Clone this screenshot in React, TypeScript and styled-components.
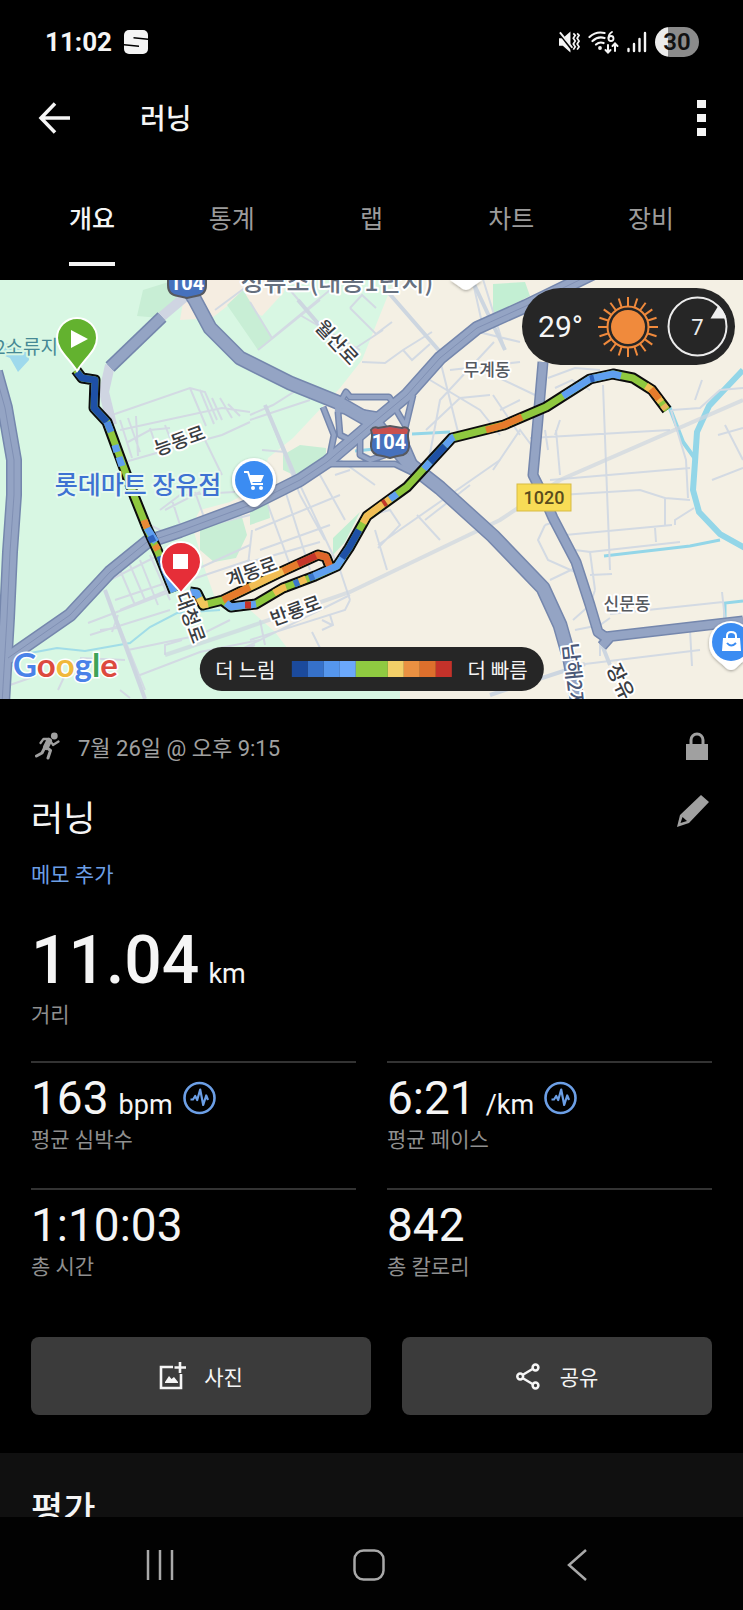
import React from "react";
import styled, { createGlobalStyle, css } from "styled-components";

const GlobalStyle = createGlobalStyle`
  * { box-sizing: border-box; }
  body {
    margin: 0;
    background: #000;
    color: #f5f5f5;
    font-family: Roboto, "Noto Sans CJK KR", sans-serif;
  }
  button, h1, h2, p, dl, dt, dd { margin: 0; padding: 0; font: inherit; }
  button { border: 0; background: none; color: inherit; cursor: pointer; }
  svg { display: block; }
`;

/* ---------- layout ---------- */

const Screen = styled.div`
  display: flex;
  flex-direction: column;
  height: 100vh;
`;

const StatusBar = styled.div`
  display: flex;
  align-items: center;
  justify-content: space-between;
  height: 83px;
  padding: 0 44px 0 45px;
  flex: none;
`;

const StatusGroup = styled.div<{ $gap: number }>`
  display: flex;
  align-items: center;
  gap: ${(p) => p.$gap}px;
`;

const Clock = styled.time`
  font-size: 26px;
  font-weight: 700;
  line-height: 32px;
`;

const Battery = styled.span`
  width: 44px;
  height: 30px;
  border-radius: 15px;
  background: linear-gradient(90deg, #ececec 30%, #8b8b8b 30%);
  color: #111;
  font-size: 24px;
  font-weight: 600;
  line-height: 30px;
  text-align: center;
`;

const AppBar = styled.header`
  display: flex;
  align-items: center;
  height: 70px;
  padding: 0 30px 0 38px;
  flex: none;
`;

const IconButton = styled.button`
  display: flex;
  align-items: center;
  justify-content: center;
`;

const AppTitle = styled.h1`
  flex: 1;
  margin-left: 70px;
  padding-top: 3px;
  font-size: 28px;
  font-weight: 500;
  line-height: 40px;
`;

const Tabs = styled.nav`
  display: flex;
  height: 127px;
  padding: 29px 22px 14px;
  flex: none;
`;

const TabSlot = styled.div`
  flex: 1;
  display: flex;
  justify-content: center;
`;

const Tab = styled.button<{ $active?: boolean }>`
  display: flex;
  align-items: center;
  padding-bottom: 4px;
  border-bottom: 4px solid transparent;
  color: #9c9c9c;
  font-size: 25px;
  line-height: 36px;
  ${(p) =>
    p.$active &&
    css`
      color: #f5f5f5;
      font-weight: 500;
      border-bottom-color: #f5f5f5;
    `}
`;

const Content = styled.main`
  flex: 1;
  min-height: 0;
  overflow-y: auto;
  scrollbar-width: none;
`;

/* ---------- map ---------- */

const MapBox = styled.section`
  position: relative;
  height: 419px;
  overflow: hidden;
  background: #f4f0e4;
`;

const MapSvg = styled.svg`
  width: 100%;
  height: 100%;
`;

const WeatherPill = styled.div`
  position: absolute;
  top: 8px;
  right: 8px;
  display: flex;
  align-items: center;
  gap: 9px;
  height: 77px;
  padding: 0 7px 0 16px;
  border-radius: 39px;
  background: #262626;
`;

const Temperature = styled.span`
  padding-right: 6px;
  font-size: 30px;
`;

const Legend = styled.div`
  position: absolute;
  bottom: 8px;
  left: 50%;
  transform: translateX(-50%);
  display: flex;
  align-items: center;
  gap: 16px;
  height: 44px;
  padding: 0 16px;
  border-radius: 22px;
  background: #262626;
  font-size: 20px;
  white-space: nowrap;
`;

const Scale = styled.div`
  display: flex;
`;

const Swatch = styled.span<{ $color: string; $span: number }>`
  width: ${(p) => p.$span * 16}px;
  height: 16px;
  background: ${(p) => p.$color};
`;

/* ---------- details ---------- */

const Details = styled.section`
  padding: 24px 31px 38px;
`;

const MetaRow = styled.div`
  display: flex;
  align-items: center;
  justify-content: space-between;
  padding: 0 4px;
  height: 46px;
`;

const When = styled.p`
  display: flex;
  align-items: center;
  gap: 17px;
  color: #a0a0a0;
  font-size: 22px;
`;

const TitleRow = styled.div`
  display: flex;
  align-items: flex-start;
  justify-content: space-between;
  margin-top: 26px;
  padding-right: 3px;
`;

const Title = styled.h2`
  font-size: 35px;
  font-weight: 400;
  line-height: 50px;
`;

const AddNote = styled.button`
  margin-top: 14px;
  color: #6c9fe6;
  font-size: 21px;
  line-height: 32px;
`;

const Stat = styled.dl<{ $ruled?: boolean }>`
  display: flex;
  flex-direction: column-reverse;
  ${(p) =>
    p.$ruled &&
    css`
      height: 127px;
      justify-content: flex-end;
      padding-top: 9px;
      border-top: 2px solid #333;
    `}
`;

const StatLabel = styled.dt`
  color: #8f8f8f;
  font-size: 21px;
  line-height: 32px;
`;

const StatValue = styled.dd<{ $large?: boolean }>`
  display: flex;
  align-items: baseline;
  gap: ${(p) => (p.$large ? 9 : 10)}px;
  font-size: ${(p) => (p.$large ? 66 : 46)}px;
  font-weight: ${(p) => (p.$large ? 500 : 400)};
  line-height: ${(p) => (p.$large ? 76 : 52)}px;
`;

const Unit = styled.span`
  font-size: 27px;
  font-weight: 400;
  line-height: 28px;
`;

const BadgeWrap = styled.span`
  align-self: center;
`;

const Headline = styled.div`
  margin: 32px 0 30px;
`;

const StatGrid = styled.div`
  display: grid;
  grid-template-columns: 1fr 1fr;
  column-gap: 31px;
`;

const Actions = styled.div`
  display: flex;
  gap: 31px;
  margin-top: 22px;
`;

const ActionButton = styled.button<{ $grow: number; $gap: number }>`
  flex: ${(p) => p.$grow} 1 0;
  display: flex;
  align-items: center;
  justify-content: center;
  gap: ${(p) => p.$gap}px;
  height: 78px;
  border-radius: 8px;
  background: #3b3b3b;
  font-size: 21px;
`;

const Review = styled.section`
  padding: 33px 31px;
  background: #101010;
`;

const ReviewTitle = styled(Title)`
  font-weight: 500;
`;

const SystemNav = styled.footer`
  display: flex;
  align-items: center;
  justify-content: space-between;
  height: 93px;
  padding: 2px 152px 0 144px;
  background: #020202;
  flex: none;
`;

/* ---------- icons ---------- */

const Pulse = () => (
  <svg width="33" height="34" viewBox="0 0 33 34" fill="none" stroke="#6c9fe6" role="img" aria-label="그래프">
    <circle cx="16.500" cy="17" r="15" strokeWidth="2.600" />
    <path d="M7.500 18.500h2.500l2.200-3.500 2 4 3-10.500 3 15.500 3-9.500 1.800 4.500" strokeWidth="2.200" strokeLinejoin="round" />
  </svg>
);

const Sun = () => (
  <svg width="60" height="60" viewBox="-30 -30 60 60" role="img" aria-label="맑음">
    <g stroke="#f08a3c" strokeWidth="2">
      {Array.from({ length: 20 }, (_, i) => (
        <line key={i} x1="0" y1="-21" x2="0" y2="-30" transform={`rotate(${i * 18})`} />
      ))}
    </g>
    <circle r="20.500" fill="none" stroke="#f08a3c" strokeWidth="2" />
    <circle r="17" fill="#f08a3c" />
  </svg>
);

const Wind = () => (
  <svg width="61" height="61" viewBox="-30.500 -30.500 61 61">
    <circle r="29" fill="none" stroke="#ececec" strokeWidth="2" />
    <path d="M13-8L21-21A30 30 0 0 1 29-8Z" fill="#f0f0f0" />
    <text x="0" y="8" textAnchor="middle" fontSize="22" fill="#ececec">7</text>
  </svg>
);

/* ---------- map data ---------- */

const minorRoads = [
  // north-west grid
  "M112 135L190 108 205 112 217 140M120 150L222 128 250 132M125 182L160 172 222 155 250 142M120 140L132 178M128 138L140 172M136 136L138 176M190 108L206 146M200 110L214 144M212 118L222 140M220 118L232 138M228 124L240 136M128 162L150 150 170 148M150 148L156 166M165 145L170 158M205 160L222 195",
  // north centre
  "M258 70L320 20M290 10L345 75M250 22L272 58 330 10M345 75L383 50M300 35L360 70M250 135L273 125 300 108M265 125L300 215M262 170L285 172M215 30L250 4M350 28L376 54 392 42M350 28L362 15 376 28",
  // north-east
  "M362 82L385 83 403 70 432 52M403 70L412 80 430 64M472 -2L484 52M482 -4L505 70M470 50L520 62M494 62L440 120 425 200M440 80L460 160M426 150L460 118 490 115M430 100L480 130 500 155M450 90L520 82M493 95L535 115M493 115L520 155M493 190L520 150 535 170M500 130L520 120",
  "M548 98L575 88 600 90M555 108L572 100 590 110M603 105L610 290M530 158L670 150M550 200L690 188M545 150L548 170M556 150L560 195M671 130L686 180 688 218M672 130L700 128 720 110 743 108M695 120L702 100M718 155L743 148M725 145L743 180M712 200L743 188M555 155L560 140",
  // east
  "M560 215L640 210 665 218 665 245M665 218L690 220M675 245L675 240 694 228M565 255L672 245M590 272L680 262M655 248L656 262M575 270L590 272 595 310M590 295L612 294M545 245L538 260 548 280 575 292M545 245L560 240M550 300L575 288M573 340L590 325 595 310M575 350L600 345 610 338M610 334L723 322M722 312L725 340M585 384L700 370M600 355L600 376M690 350L692 386",
  // centre
  "M250 140L310 120M270 208L340 180 375 205M300 215L325 260M255 250L340 215M260 270L330 245M268 225L290 285M285 210L310 290M300 205L340 290M320 195L345 240M250 225L262 220 288 200 310 188M375 250L387 290M370 235L390 230 400 245 378 268M417 235L440 260M378 265L500 180M335 195L350 190M470 205L425 240M340 290L350 320M350 315L240 370M250 360L345 330 350 320M312 352L320 368M322 340L332 345M330 335L333 345 322 350M260 340L265 365M255 365L230 375",
  // south-west
  "M105 310L145 410M110 300L165 272M115 320L175 300M120 330L180 305M88 343L175 310M90 355L170 330M120 290L135 325M130 285L145 320M140 280L158 325M150 275L170 320M118 335L112 352M100 350L118 348M128 370L200 355 230 340M165 375L165 365 182 360M140 395L200 372 260 360M125 380L80 378M120 410L130 418M10 405L30 398M65 395L58 410M150 245L170 255 250 235M165 230L200 212M172 220L180 245M195 212L205 240M160 230L180 215 235 212",
  // southern strip
  "M190 300L250 280M195 290L250 265M250 282L320 262M252 250L248 285",
];

const wideMinor = ["M165 375L240 350 350 312 500 240 560 200 743 120", "M600 360L610 385M490 415L585 384"];

const highways: { d: string; w: number }[] = [
  { d: "M-5 92L5 128 14 180 14 215 10 272 7 338 2 424", w: 14 },
  { d: "M8 378L70 335 110 292 147 262 180 251 250 225 300 200 327 182 367 148 407 115 440 78 477 48 526 26 600 -10", w: 12 },
  { d: "M186 6L195 20 210 48 240 78 290 103 337 122 377 145 407 182 440 208 493 256 543 308 560 345 570 380 578 424", w: 13 },
  { d: "M543 82L536 162 533 195 543 215 553 238 576 282 590 325 598 352 605 357 743 341M610 357L602 366", w: 9 },
  { d: "M110 87L162 37", w: 11 },
  { d: "M337 128L346 112 350 117 389 117 398 130M323 127L334 155 329 180M338 132L340 155 350 160 363 155M327 184L395 184 420 196M413 115L403 157 413 180 420 196M395 128L405 145M335 130L360 132 384 136M360 158L360 175 370 180 385 175", w: 5 },
];

const track =
  "M76 90L82 98 95 100 94 128 107 142 135 218 147 248 158 272 174 312M190 312L197 313 203 325 223 320 250 307 283 291 318 275 326 277 330 287M223 321L231 327 256 324 283 308 315 296 337 286 349 268 367 236 407 207 452 158 504 145 546 127 590 99 613 94 633 98 652 110 667 130";

type Leg = { color: string; d: string };
const legs: Leg[] = [
  { color: "#1e50a6", d: "M77 92L82 98 95 100 94 128 107 142" },
  { color: "#4f8be0", d: "M107 142L111 152" },
  { color: "#5f9ff0", d: "M115 165L117 172M119 177L122 186M147 248L156 262" },
  { color: "#2f62bd", d: "M127 200L129 205M150 256L153 262M160 276L164 288" },
  { color: "#e98a35", d: "M144 240L147 248M155 265L158 270" },
  { color: "#5f9ff0", d: "M164 288L174 312" },
  { color: "#5f9ff0", d: "M190 312L197 313 199 318" },
  { color: "#f2c75b", d: "M199 318L203 325 208 324" },
  { color: "#e57b2c", d: "M223 320L250 307M281 292L300 283" },
  { color: "#f2bd55", d: "M250 307L283 291" },
  { color: "#c5352a", d: "M298 284L318 275" },
  { color: "#e0662a", d: "M316 276L318 275 326 277 330 287" },
  { color: "#5f9ff0", d: "M226 323L231 327 246 325M250 325L256 324" },
  { color: "#c5352a", d: "M245 325L251 325" },
  { color: "#f2bd55", d: "M274 313L283 308 286 307M299 302L306 299" },
  { color: "#3c77cc", d: "M294 304L299 302M309 298L315 296" },
  { color: "#5f9ff0", d: "M314 296L337 286 343 277" },
  { color: "#1e50a6", d: "M342 278L349 268 359 250" },
  { color: "#f2bd55", d: "M363 243L367 236 383 224M386 222L390 219" },
  { color: "#c5352a", d: "M383 224L386 222" },
  { color: "#5f9ff0", d: "M390 219L397 214M424 189L430 182M445 166L452 158 454 157" },
  { color: "#1e50a6", d: "M430 182L445 166" },
  { color: "#e57b2c", d: "M486 150L504 145 522 137" },
  { color: "#5f9ff0", d: "M563 116L590 99 613 94 621 96" },
  { color: "#2c5fb8", d: "M590 99L594 98" },
  { color: "#f2bd55", d: "M646 106L652 110M658 118L661 122" },
  { color: "#e57b2c", d: "M651 109L659 119" },
  { color: "#e8b45a", d: "M663 125L666 129" },
];

const MapArt = () => (
  <MapSvg viewBox="0 0 743 419" preserveAspectRatio="xMidYMid slice" role="img" aria-label="러닝 경로 지도">
    <defs>
      <filter id="pinShadow" x="-30%" y="-30%" width="160%" height="160%">
        <feDropShadow dx="0" dy="1" stdDeviation="1.500" floodOpacity="0.350" />
      </filter>
    </defs>
    <rect width="743" height="419" fill="#f4f0e4" />
    <path d="M0 0H394L362 80 340 108 293 158 268 178 262 205 230 222 200 230 192 245 205 290 215 318 250 330 275 352 300 385 400 408V419H0Z" fill="#d8f7e3" />
    <path d="M180 40L186 4 205 0 285 0 284 12 262 36 250 30 245 12 212 38Z" fill="#f5ede1" />
    <path d="M137 36L143 10 175 0 182 12 160 38Z M227 25L243 10 272 58 258 70Z M283 175L300 165 326 168 326 180 296 196 283 190Z M200 250L240 230 247 255 236 278 214 282 200 270Z M250 225L268 218 270 238 250 245Z" fill="#c8eed5" />
    <path d="M493 4L525 2 530 16 493 34Z M333 258L360 232 345 262 333 275Z" fill="#c3efd3" />
    <path d="M0 62L28 68 29 80 18 92 10 78 0 74Z" fill="#9ed9ec" />
    <g fill="none" stroke="#93d6e8">
      <path d="M743 90L709 126 697 152 695 182 693 210 699 232 720 254 745 268" strokeWidth="6" />
      <path d="M669 126L683 162 696 180" strokeWidth="4" />
      <path d="M604 276L690 266 720 260M725 340V323L743 321" strokeWidth="3" />
      <path d="M412 154L450 152M355 171L385 168" strokeWidth="3" />
      <path d="M0 402L20 375 57 368 85 371 130 363 150 347 177 333 220 330" strokeWidth="2" opacity="0.800" />
    </g>
    <g fill="none" stroke="#d3dae3" strokeWidth="2">
      {minorRoads.map((d) => <path key={d} d={d} />)}
    </g>
    <g fill="none" stroke="#cdd6e0" strokeWidth="4">
      <path d={wideMinor[0]} opacity="0.700" />
      <path d={wideMinor[1]} />
      <path d="M298 20L345 75M388 12L442 74M265 125L300 208M472 0L505 70M105 310L145 419" />
    </g>
    <path d="M186 16L160 38M110 85L104 112 112 145" fill="none" stroke="#cfd5e2" strokeWidth="10" />
    <g fill="none" stroke="#7587ad" strokeLinejoin="round">
      {highways.map((h) => <path key={h.d} d={h.d} strokeWidth={h.w + 2} />)}
    </g>
    <g fill="none" stroke="#94a4c4" strokeLinejoin="round">
      {highways.map((h) => <path key={h.d} d={h.d} strokeWidth={h.w - 1} />)}
    </g>
    <g fill="none" stroke="#8090b4" strokeWidth="1">
      <path d={highways[0].d} />
      <path d={highways[1].d} />
    </g>

    <g fill="none" strokeLinejoin="round">
      <path d={track} stroke="#0c0c0c" strokeWidth="11" />
      <path d={track} stroke="#8fc83f" strokeWidth="7" />
      {legs.map((l) => <path key={l.d} d={l.d} stroke={l.color} strokeWidth="7" />)}
    </g>

    <g fontFamily='"Noto Sans CJK KR", sans-serif' fontWeight="500" stroke="#fff" strokeWidth="4" strokeLinejoin="round" paintOrder="stroke" textAnchor="middle">
      <text x="58" y="74" textAnchor="end" fontSize="19" fill="#468995" fontWeight="400" stroke="#d8f7e3">2소류지</text>
      <text x="337" y="11" fontSize="25" fill="#66707f">정류소(대동1단지)</text>
      <text fontSize="19" fill="#3a3d42" transform="translate(332 67) rotate(47)">월산로</text>
      <text x="487" y="96" fontSize="17" fill="#55595f">무계동</text>
      <text fontSize="19" fill="#3a3d42" transform="translate(182 167) rotate(-20)">능동로</text>
      <text x="138" y="214" fontSize="25" fill="#3e72d2" stroke="#e6faee">롯데마트 장유점</text>
      <text fontSize="19" fill="#3a3d42" transform="translate(254 298) rotate(-20)">계동로</text>
      <text fontSize="19" fill="#3a3d42" transform="translate(298 337) rotate(-20)">반룡로</text>
      <text fontSize="19" fill="#3a3d42" transform="translate(184 340) rotate(70)">대청로</text>
      <text x="627" y="330" fontSize="17" fill="#55595f">신문동</text>
      <text fontSize="20" fill="#4a5878" textAnchor="start" transform="translate(563 364) rotate(84)">남해2지</text>
      <text fontSize="20" fill="#3a3d42" textAnchor="start" transform="translate(606 388) rotate(64)">장유</text>
    </g>

    <g fontFamily="Roboto, sans-serif" fontWeight="700" fontSize="20" fill="#fff" textAnchor="middle">
      <path d="M371 150Q374 146 378 148L390 146 402 148Q406 146 409 150 407 155 409 163 410 172 403 175 396 176 390 178 384 176 377 175 370 172 371 163 373 155 371 150Z" fill="#4671bd" stroke="#57595f" strokeWidth="2" />
      <path d="M372 150Q374 147 378 149L390 147 402 149Q406 147 408 150L407 154H373Z" fill="#c8504e" />
      <text x="389" y="169">104</text>
      <path d="M168-10H206V5Q206 15 196 16L187 18 178 16Q168 15 168 5Z" fill="#4671bd" stroke="#57595f" strokeWidth="2" />
      <text x="187" y="10">104</text>
      <rect x="517" y="204" width="54" height="27" fill="#f8dc56" stroke="#d7bb45" />
      <text x="544" y="224" fontSize="18" fill="#5a4c1c" fontWeight="500">1020</text>
    </g>

    <g filter="url(#pinShadow)" fill="#fff">
      <path d="M254 178A22 22 0 0 1 276 200C276 213 267 217 261 223Q254 231 247 223C241 217 232 213 232 200A22 22 0 0 1 254 178Z" />
      <path d="M731 341A22 22 0 0 1 753 363C753 376 744 380 738 386Q731 394 724 386C718 380 709 376 709 363A22 22 0 0 1 731 341Z" />
      <path d="M450 0H482L472 7Q466 13 460 7Z" />
    </g>
    <circle cx="254" cy="200" r="19" fill="#3b8cf2" />
    <path d="M244 192h4l4 12h11" fill="none" stroke="#fff" strokeWidth="2" />
    <path d="M249 195h15l-3 7h-10z" fill="#fff" />
    <circle cx="253" cy="208" r="2" fill="#fff" />
    <circle cx="261" cy="208" r="2" fill="#fff" />
    <circle cx="731" cy="362" r="19" fill="#3b8cf2" />
    <path d="M723 358H740L741 371H722Z" fill="#fff" />
    <path d="M727 358V356Q727 352 731 352 736 352 736 356V358" fill="none" stroke="#fff" strokeWidth="2" />
    <path d="M727 363Q731 368 736 363" fill="none" stroke="#3b8cf2" strokeWidth="2" />

    <g stroke="#fff" strokeWidth="2">
      <path d="M77 38A20 20 0 0 1 97 58C97 70 86 77 77 91 68 77 57 70 57 58A20 20 0 0 1 77 38Z" fill="#63b22f" />
      <path d="M181 262A20 20 0 0 1 201 282C201 294 190 301 181 313 172 301 161 294 161 282A20 20 0 0 1 181 262Z" fill="#e62e38" />
    </g>
    <path d="M71 50L88 59 71 68Z" fill="#fff" />
    <rect x="173" y="274" width="15" height="15" fill="#fff" />

    <text x="13" y="397" fontFamily="Lato, sans-serif" fontSize="33" fontWeight="700" stroke="#fff" strokeWidth="3" paintOrder="stroke">
      <tspan fill="#4a82e8">G</tspan>
      <tspan fill="#dc4a3e">o</tspan>
      <tspan fill="#f0b83a">o</tspan>
      <tspan fill="#4a82e8">g</tspan>
      <tspan fill="#3fa357">l</tspan>
      <tspan fill="#dc4a3e">e</tspan>
    </text>
  </MapSvg>
);

const paceScale = [
  { color: "#1b4a9c", span: 1 },
  { color: "#3671c9", span: 1 },
  { color: "#5596ec", span: 1 },
  { color: "#6ba8fb", span: 1 },
  { color: "#8fca41", span: 2 },
  { color: "#f2cf68", span: 1 },
  { color: "#e99142", span: 1 },
  { color: "#dd6f2c", span: 1 },
  { color: "#c4322a", span: 1 },
];

const tabs = ["개요", "통계", "랩", "차트", "장비"];

const stats = [
  { label: "평균 심박수", value: "163", unit: "bpm", badge: true },
  { label: "평균 페이스", value: "6:21", unit: "/km", badge: true },
  { label: "총 시간", value: "1:10:03" },
  { label: "총 칼로리", value: "842" },
];

export default function App() {
  return (
    <Screen>
      <GlobalStyle />
      <StatusBar>
        <StatusGroup $gap={12}>
          <Clock>11:02</Clock>
          <svg width="24" height="24" viewBox="0 0 24 24">
            <rect width="24" height="24" rx="5" fill="#f5f5f5" />
            <path d="M9.500 7L24 8.500V10L9.500 8.500ZM0 14L15 15.500V17L0 15.500Z" fill="#000" />
          </svg>
        </StatusGroup>
        <StatusGroup $gap={8}>
          <svg width="21" height="22" viewBox="0 0 22 22">
            <path d="M0 7H4L12 0V22L4 15H0Z" fill="#f5f5f5" />
            <path d="M0 1L14 19" stroke="#000" strokeWidth="3" />
            <path d="M1 1L14 17" stroke="#f5f5f5" strokeWidth="2" />
            <path d="M15 2l2 2-2 3 2 3-2 3 2 3-2 3M19 2l2 2-2 3 2 3-2 3 2 3-2 3" fill="none" stroke="#f5f5f5" strokeWidth="1.800" />
          </svg>
          <svg width="31" height="24" viewBox="0 0 31 24" fill="none" stroke="#f5f5f5" strokeWidth="2.200" strokeLinecap="round">
            <path d="M1.500 7Q8 1 16.500 3M4.500 11Q10 6 16.500 8M8 14.500Q11.500 11.500 15.500 13" />
            <circle cx="12" cy="18" r="0.800" fill="#f5f5f5" />
            <path d="M24 2Q20.500 4 20.500 8" strokeWidth="1.800" />
            <circle cx="23" cy="8.500" r="2.500" strokeWidth="1.800" />
            <path d="M20 15V22M17.500 20L20 22.500 22.500 20M27 21V14M24.500 16L27 13.500 29.500 16" strokeWidth="2" />
          </svg>
          <svg width="20" height="22" viewBox="0 0 20 22" fill="none" stroke="#f5f5f5" strokeWidth="2.400" strokeLinecap="round">
            <path d="M1.500 18V20M7 13V20M12.500 8V20M18 2V20" />
          </svg>
          <Battery>30</Battery>
        </StatusGroup>
      </StatusBar>

      <AppBar>
        <IconButton aria-label="뒤로">
          <svg width="32" height="32" viewBox="0 0 32 32" fill="none" stroke="#f5f5f5" strokeWidth="3.500">
            <path d="M32 16H4M17 1.500L3 16 17 30.500" />
          </svg>
        </IconButton>
        <AppTitle>러닝</AppTitle>
        <IconButton aria-label="메뉴">
          <svg width="24" height="36" viewBox="0 0 24 36" fill="#f5f5f5">
            <path d="M8 0h9v8H8zM8 14h9v8H8zM8 28h9v8H8z" />
          </svg>
        </IconButton>
      </AppBar>

      <Tabs role="tablist">
        {tabs.map((t, i) => (
          <TabSlot key={t}>
            <Tab role="tab" aria-selected={i === 0} $active={i === 0}>{t}</Tab>
          </TabSlot>
        ))}
      </Tabs>

      <Content>
        <MapBox>
          <MapArt />
          <WeatherPill>
            <Temperature>29°</Temperature>
            <Sun />
            <Wind />
          </WeatherPill>
          <Legend>
            <span>더 느림</span>
            <Scale>
              {paceScale.map((s) => <Swatch key={s.color} $color={s.color} $span={s.span} />)}
            </Scale>
            <span>더 빠름</span>
          </Legend>
        </MapBox>

        <Details>
          <MetaRow>
            <When>
              <svg width="26" height="28" viewBox="0 0 26 28" fill="none" stroke="#a0a0a0" strokeLinecap="round" strokeLinejoin="round">
                <circle cx="19.300" cy="4" r="3.400" fill="#a0a0a0" stroke="none" />
                <path d="M14 9L11 15" strokeWidth="6" />
                <path d="M14 7L8.500 6.800 5.500 11M15.500 9L18 13 23.500 9.500" strokeWidth="2.300" />
                <path d="M11 15L15.500 18.500 13 26M9.500 16L7 21 1.500 24" strokeWidth="3" />
              </svg>
              <span>7월 26일 @ 오후 9:15</span>
            </When>
            <svg width="22" height="28" viewBox="0 0 22 28">
              <path d="M0 12H22V28H0Z" fill="#a0a0a0" />
              <path d="M5 13V8A6 6 0 0 1 17 8V13" fill="none" stroke="#a0a0a0" strokeWidth="3" />
            </svg>
          </MetaRow>
          <TitleRow>
            <Title>러닝</Title>
            <IconButton aria-label="이름 편집">
              <svg width="32" height="32" viewBox="0 0 32 32" fill="#a0a0a0">
                <path d="M24 0L32 7 12 28 0 32 3 20ZM5.500 22L3.500 28 10 26Z" fillRule="evenodd" />
              </svg>
            </IconButton>
          </TitleRow>
          <AddNote>메모 추가</AddNote>

          <Headline>
            <Stat>
              <StatLabel>거리</StatLabel>
              <StatValue $large>11.04<Unit>km</Unit></StatValue>
            </Stat>
          </Headline>

          <StatGrid>
            {stats.map((s) => (
              <Stat key={s.label} $ruled>
                <StatLabel>{s.label}</StatLabel>
                <StatValue>
                  {s.value}
                  {s.unit && <Unit>{s.unit}</Unit>}
                  {s.badge && <BadgeWrap><Pulse /></BadgeWrap>}
                </StatValue>
              </Stat>
            ))}
          </StatGrid>

          <Actions>
            <ActionButton $grow={340} $gap={18}>
              <svg width="27" height="28" viewBox="0 0 27 28" fill="none" stroke="#f5f5f5" strokeWidth="2.600">
                <path d="M14 5H2V26H22V12M21 0V11M15.500 5.500H27" />
                <path d="M6 20L10 14 12.500 17 15 15 19 20V21H6Z" fill="#f5f5f5" stroke="none" />
              </svg>
              사진
            </ActionButton>
            <ActionButton $grow={310} $gap={20}>
              <svg width="24" height="27" viewBox="0 0 24 27" fill="none" stroke="#f5f5f5" strokeWidth="2.500">
                <path d="M6.500 12L16.500 6M6.500 15L16.500 21" />
                <circle cx="4.200" cy="13.500" r="2.900" />
                <circle cx="19.500" cy="4.500" r="2.900" />
                <circle cx="19.500" cy="22.500" r="2.900" />
              </svg>
              공유
            </ActionButton>
          </Actions>
        </Details>

        <Review>
          <ReviewTitle>평가</ReviewTitle>
        </Review>
      </Content>

      <SystemNav>
        <IconButton aria-label="최근 앱">
          <svg width="30" height="32" viewBox="0 0 30 32" stroke="#a9a9a9" strokeWidth="2.500">
            <path d="M4 1V31M16 1V31M28 1V31" />
          </svg>
        </IconButton>
        <IconButton aria-label="홈">
          <svg width="32" height="32" viewBox="0 0 32 32" fill="none" stroke="#a9a9a9" strokeWidth="2.500">
            <rect x="1.500" y="1.500" width="29" height="29" rx="9" />
          </svg>
        </IconButton>
        <IconButton aria-label="이전">
          <svg width="28" height="32" viewBox="-4 0 28 32" fill="none" stroke="#a9a9a9" strokeWidth="2.500">
            <path d="M19 1L2 16 19 31" />
          </svg>
        </IconButton>
      </SystemNav>
    </Screen>
  );
}
